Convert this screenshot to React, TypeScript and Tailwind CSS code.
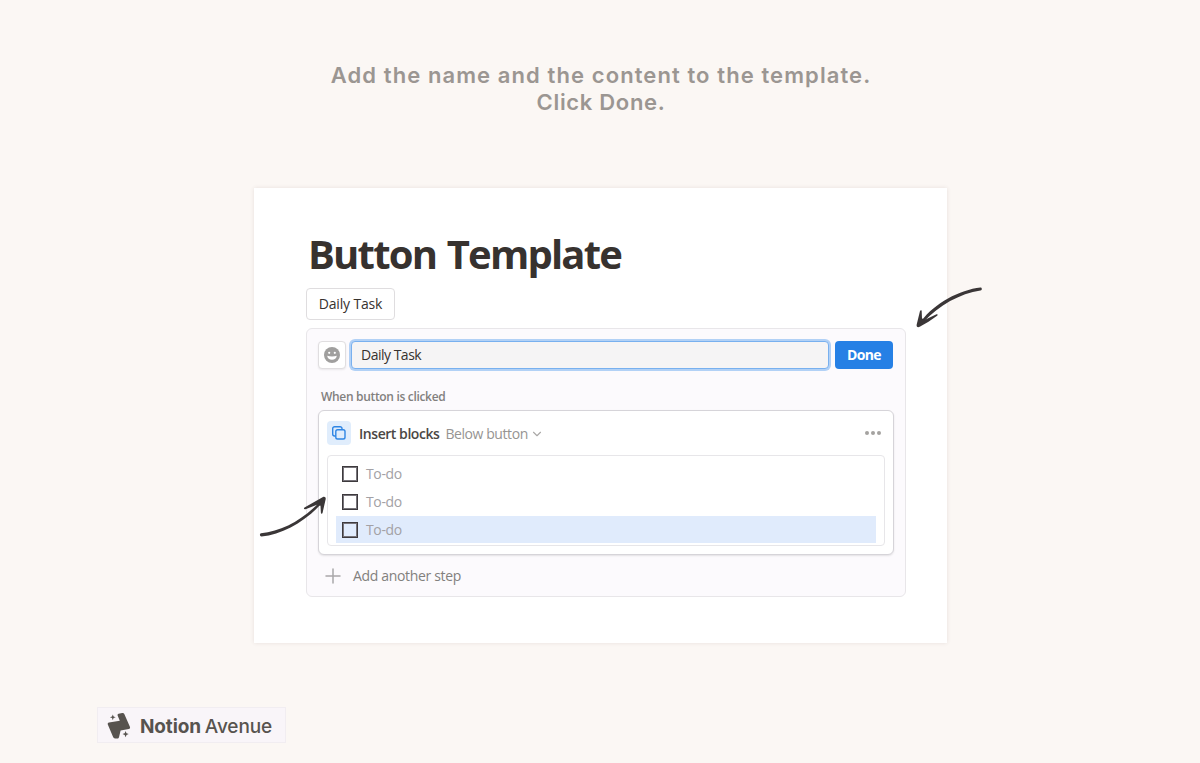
import React from 'react';
import { ChevronDown, Plus } from 'lucide-react';

interface TodoItem {
  id: number;
  label: string;
  selected: boolean;
}

const todos: TodoItem[] = [
  { id: 1, label: 'To-do', selected: false },
  { id: 2, label: 'To-do', selected: false },
  { id: 3, label: 'To-do', selected: true }
];

const SmileIcon: React.FC = () => (
  <svg className="w-4 h-4" viewBox="0 0 16 16">
    <circle cx="8" cy="8" r="8" fill="#a09f9e" />
    <circle cx="5.2" cy="5.8" r="1.1" fill="#fff" />
    <circle cx="10.8" cy="5.8" r="1.1" fill="#fff" />
    <path d="M3.2 8.8c3 .9 6.600.9 9.600 0-.3 2.400-2.200 4-4.800 4s-4.500-1.600-4.800-4z" fill="#fff" />
  </svg>
);

const CopyIcon: React.FC = () => (
  <svg className="w-4 h-4" viewBox="0 0 16 16" fill="none" stroke="#2f86e4" strokeWidth="1.4">
    <path d="M4.5 11H3.6A1.9 1.9 0 0 1 1.7 9.1V3.6a1.9 1.9 0 0 1 1.9-1.9h5.5A1.9 1.9 0 0 1 11 3.6v.9" />
    <rect x="4.8" y="4.8" width="9.2" height="9.2" rx="1.8" />
  </svg>
);

const BrandLogo: React.FC = () => (
  <svg className="w-6 h-7" viewBox="0 0 24 28" fill="#57534f">
    <path d="M10.700 3.800c-.4-1 0-1.700.9-2l3.600-.8c1-.2 1.700.1 2.100 1L22.900 14.800c.5 1.200 0 2-1.100 2.300L13.600 18.600l-1.600 6.600c-.3.900-.8 1.200-1.600 1.200H8c-.9 0-1.500-.4-1.900-1.300L.9 12.800c-.5-1.200 0-2 1.100-2.200L12.800 8.800z" />
    <path d="M5.800 2.400 6.600 4.500l2.100.8-2.100.8-.8 2.100L5 6.100l-2.100-.8L5 4.500zM18.600 19l.9 2.200 2.200.9-2.200.9-.9 2.200-.9-2.200-2.200-.9 2.200-.9z" />
  </svg>
);

const App: React.FC = () => {
  return (
    <div className="relative flex flex-col w-[1200px] h-[763px] overflow-hidden bg-[#fbf7f4] pt-[62px] font-['Open_Sans',sans-serif]">
      {/* Instructions */}
      <h2 className="text-center font-[Inter,sans-serif] text-[22px] leading-[27px] font-semibold text-[#9b9692]">
        <span className="block pl-[2px] tracking-[1.09px]">Add the name and the content to the template.</span>
        <span className="block pl-[2px] tracking-[0.68px]">Click Done.</span>
      </h2>

      {/* Page card */}
      <div className="mt-[72px] ml-[254px] w-[693px] h-[455px] shrink-0 bg-white pl-[52px] pt-[38px] shadow-[0_0_4px_rgba(80,60,60,0.12)]">
        <h1 className="pl-[2px] text-[40px] leading-[56px] font-bold tracking-[-1.8px] [word-spacing:2px] text-[#37322f] whitespace-nowrap">
          Button Template
        </h1>
        <button className="mt-[6px] flex h-8 w-[89px] items-center justify-center rounded border border-[#dfdddf] pb-[2px] text-[14px] tracking-[-0.15px] text-[#37322f] whitespace-nowrap">
          Daily Task
        </button>

        {/* Button editor */}
        <div className="mt-2 w-[600px] h-[269px] rounded-md border border-[#e8e6e9] bg-[#fcfafd] px-[11px] pt-3">
          <div className="flex h-7 items-center">
            <div className="flex h-7 w-7 items-center justify-center rounded border border-[#e0dee0] bg-white shadow-[0_1px_2px_rgba(0,0,0,0.08)]">
              <SmileIcon />
            </div>
            <div className="ml-[5px] flex h-7 w-[478px] items-center rounded border border-[#78b0ef] bg-[#f5f4f5] pb-[2px] pl-[9px] text-[14px] tracking-[-0.5px] text-[#37322f] shadow-[0_0_0_2px_#b2d1f6]">
              Daily Task
            </div>
            <button className="ml-[6px] h-7 w-[58px] rounded bg-[#2680e5] pb-[2px] text-[14px] font-bold tracking-[-0.6px] text-white">
              Done
            </button>
          </div>

          <p className="mt-[18px] pl-[3px] text-[12px] leading-5 font-semibold tracking-[-0.32px] text-[#82807e]">
            When button is clicked
          </p>

          <div className="mt-[3px] h-[145px] w-[576px] rounded-md border border-[#d6d4d9] bg-white px-2 pt-[10px] shadow-[0_1px_2px_rgba(0,0,0,0.1)]">
            <div className="flex h-6 items-center">
              <div className="flex h-6 w-6 items-center justify-center rounded-sm bg-[#e0edfc]">
                <CopyIcon />
              </div>
              <span className="ml-2 text-[14px] font-semibold tracking-[-0.45px] text-[#4b4745]">Insert blocks</span>
              <span className="ml-[6px] text-[14px] tracking-[-0.42px] text-[#969492]">Below button</span>
              <ChevronDown className="ml-[2px] mt-px h-3.5 w-3.5 text-[#aaa8a7]" strokeWidth={1.9} />
              <div className="ml-auto mr-1 flex gap-[2px]">
                <span className="h-1 w-1 rounded-full bg-[#a4a2a0]" />
                <span className="h-1 w-1 rounded-full bg-[#a4a2a0]" />
                <span className="h-1 w-1 rounded-full bg-[#a4a2a0]" />
              </div>
            </div>

            <div className="mt-[10px] h-[91px] rounded border border-[#e7e6e9] px-2 pt-1">
              {todos.map((todo) => (
                <div
                  key={todo.id}
                  className={`flex h-7 items-center border-b border-white pl-[6px] ${todo.selected ? 'bg-[#e0ebfc]' : ''}`}
                >
                  <span className="h-4 w-4 border border-[#3d3a3d] shadow-[inset_0_0_0_1px_#77747a]" />
                  <span className="ml-2 text-[14px] tracking-[-0.35px] text-[#a3a1a5]">{todo.label}</span>
                </div>
              ))}
            </div>
          </div>

          <div className="flex h-[42px] items-center pl-[3px]">
            <Plus className="h-6 w-6 text-[#a9a7a9]" strokeWidth={1.5} />
            <span className="ml-2 pb-[2px] text-[14px] tracking-[-0.33px] text-[#82807e]">Add another step</span>
          </div>
        </div>
      </div>

      {/* Brand */}
      <div className="mt-16 ml-[97px] flex h-9 w-[189px] shrink-0 items-center border border-[#f1edf1] bg-[#f9f5f9] pt-[2px] pl-[9px] font-[Inter,sans-serif] text-[19px] text-[#57534f] whitespace-nowrap">
        <BrandLogo />
        <span className="ml-[9px] pt-[2px] font-bold tracking-[-0.15px]">Notion</span>
        <span className="ml-[4px] pt-[2px] font-medium tracking-[-0.1px]">Avenue</span>
      </div>

      {/* Arrow to the Done button */}
      <svg className="absolute left-[910px] top-[282px] h-[50px] w-[76px]" viewBox="0 0 76 50" fill="#3a3637">
        <path d="M70.500 5.400c1.800 0 1.800 2.800 0 3C50 11.500 29 23 13.500 40l-2-1.200C24 21.500 50 7.500 70.500 5.400z" />
        <path d="M10 29c.6-1.400 1.900-1 1.700.5L12 36.500l3.500 1L26.500 32.300c1.300-.4 1.600.7.600 1.400L18.500 39.800 9.700 44.800c-2.200 1-3.500-.3-3-2.300z" />
      </svg>

      {/* Arrow to the block list */}
      <svg className="absolute left-[255px] top-[492px] h-[48px] w-[76px]" viewBox="0 0 76 48" fill="#3a3637">
        <path d="M6 41.200C27 39 48 28 65.500 9l2 1.500C51 29 28 42.500 6.500 44.500c-2 0-2-2.900-.5-3.300z" />
        <path d="M49.500 15.500 68 4.900c1.600-.7 2.900.3 2.700 2L67.600 20.800c-.3 1.400-1.700 1.300-1.700 0l-.4-7-3.500-1L50.500 17.200c-1.600.4-2.100-.9-1-1.700z" />
      </svg>
    </div>
  );
};

export default App;
